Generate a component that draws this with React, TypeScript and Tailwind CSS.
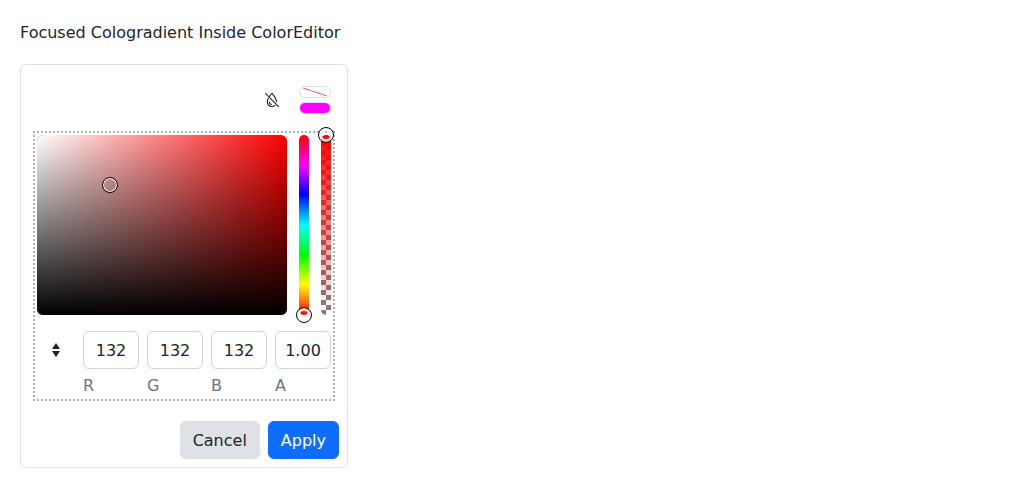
import { useState } from "react";

const range =
  "absolute -top-2 -left-[3px] m-0 block h-[196px] w-4 appearance-none bg-transparent outline-none [direction:rtl] [writing-mode:vertical-lr] [&::-webkit-slider-thumb]:box-border [&::-webkit-slider-thumb]:size-4 [&::-webkit-slider-thumb]:cursor-pointer [&::-webkit-slider-thumb]:appearance-none [&::-webkit-slider-thumb]:rounded-full [&::-webkit-slider-thumb]:border [&::-webkit-slider-thumb]:border-black [&::-webkit-slider-thumb]:bg-transparent [&::-webkit-slider-thumb]:shadow-[inset_0_0_0_3px_rgba(255,255,255,0.8)]";

function DropletSlashIcon() {
  return (
    <svg width="16" height="16" viewBox="0 0 16 16" fill="none" stroke="currentColor" aria-hidden="true">
      <path d="M1.2 1.2 14.8 14.8" strokeWidth="1.1" />
      <path d="M5.2 4.8C6 3.4 7.2 2.2 8 1.4C9.6 3.2 12.6 6.8 12.6 10.2" strokeWidth="1.1" />
      <path d="M4.4 6C3.8 7.3 3.4 8.6 3.4 10A4.6 4.6 0 0 0 11.2 13.2" strokeWidth="1.1" />
      <path d="M5.4 9.8A2.6 2.6 0 0 0 7.9 12.5" strokeWidth="1.1" />
    </svg>
  );
}

function SortIcon() {
  return (
    <svg width="16" height="16" viewBox="0 0 16 16" fill="currentColor" aria-hidden="true">
      <path d="M4 7 8 1l4 6zM4 9h8l-4 6z" />
    </svg>
  );
}

function Channel({ name, initial }: { name: string; initial: string }) {
  const [value, setValue] = useState(initial);
  const id = `channel-${name}`;
  return (
    <div className="flex min-w-0 flex-1 flex-col gap-[5px]">
      <input
        id={id}
        type="text"
        inputMode="decimal"
        value={value}
        onChange={(e) => setValue(e.target.value)}
        className="h-[38px] w-full rounded-md border border-[#ced4da] bg-white text-center text-[#212529] outline-none"
      />
      <label htmlFor={id} className="text-[#6c757d]">
        {name}
      </label>
    </div>
  );
}

function ColorGradient() {
  return (
    <div className="flex flex-col gap-4 outline-2 outline-offset-2 outline-black/30 outline-dotted">
      <div className="flex h-[180px] gap-3">
        <div className="relative flex-1 rounded-md bg-[#ff0000]">
          <div className="h-full rounded-md bg-[linear-gradient(to_top,#000,transparent),linear-gradient(to_right,#fff,rgba(255,255,255,0))]" />
          <button
            type="button"
            aria-label="Saturation and brightness"
            className="absolute top-[50px] left-[73px] size-4 -translate-x-1/2 -translate-y-1/2 rounded-full border border-black shadow-[inset_0_0_0_1px_#fff]"
          />
        </div>
        <div className="relative w-[10px] rounded-full bg-[linear-gradient(to_top,#f00,#ff0_17%,#0f0_33%,#0ff_50%,#00f_67%,#f0f_83%,#f00)]">
          <input type="range" aria-label="Hue" min={0} max={360} defaultValue={0} className={range} />
        </div>
        <div className="relative w-[10px] rounded-full bg-[linear-gradient(to_top,rgba(255,0,0,0),#f00),repeating-conic-gradient(#808080_0_25%,#fff_0_50%)] bg-[length:auto,10px_10px]">
          <input type="range" aria-label="Opacity" min={0} max={100} defaultValue={100} className={range} />
        </div>
      </div>
      <div className="flex gap-2">
        <button
          type="button"
          aria-label="Toggle colour inputs"
          className="flex size-[38px] items-center justify-center rounded-md"
        >
          <SortIcon />
        </button>
        <Channel name="R" initial="132" />
        <Channel name="G" initial="132" />
        <Channel name="B" initial="132" />
        <Channel name="A" initial="1.00" />
      </div>
    </div>
  );
}

export default function App() {
  return (
    <main className="flex flex-col items-start gap-5 bg-white px-5 pt-[21px] pb-5 font-['DejaVu_Sans',sans-serif] text-base leading-[23px] text-[#212529]">
      <p>Focused Cologradient Inside ColorEditor</p>
      <section aria-label="Color editor" className="w-full max-w-[328px] rounded-md border border-[#dee2e6]">
        <div className="flex flex-col gap-4 p-4">
          <div className="flex h-[38px] items-center justify-end gap-2">
            <button
              type="button"
              aria-label="Clear color"
              className="flex size-[38px] items-center justify-center rounded-md"
            >
              <DropletSlashIcon />
            </button>
            <div className="flex w-8 flex-col gap-1">
              <span className="h-3 overflow-hidden rounded-full border border-[#dee2e6]">
                <svg className="block h-full w-full" viewBox="0 0 30 10" fill="none" aria-hidden="true">
                  <path d="M3 1 27 9" stroke="#dc3545" strokeWidth="0.8" />
                </svg>
              </span>
              <button
                type="button"
                aria-label="Revert to current color"
                className="h-3 rounded-full border border-[#dee2e6] bg-[#ff00ff]"
              />
            </div>
          </div>
          <ColorGradient />
        </div>
        <div className="flex justify-end gap-2 p-2">
          <button type="button" className="rounded-md border border-[#dee2e6] bg-[#dee2e6] px-3 pt-[7px] pb-1.5">
            Cancel
          </button>
          <button
            type="button"
            className="rounded-md border border-[#0d6efd] bg-[#0d6efd] px-3 pt-[7px] pb-1.5 text-white"
          >
            Apply
          </button>
        </div>
      </section>
    </main>
  );
}
